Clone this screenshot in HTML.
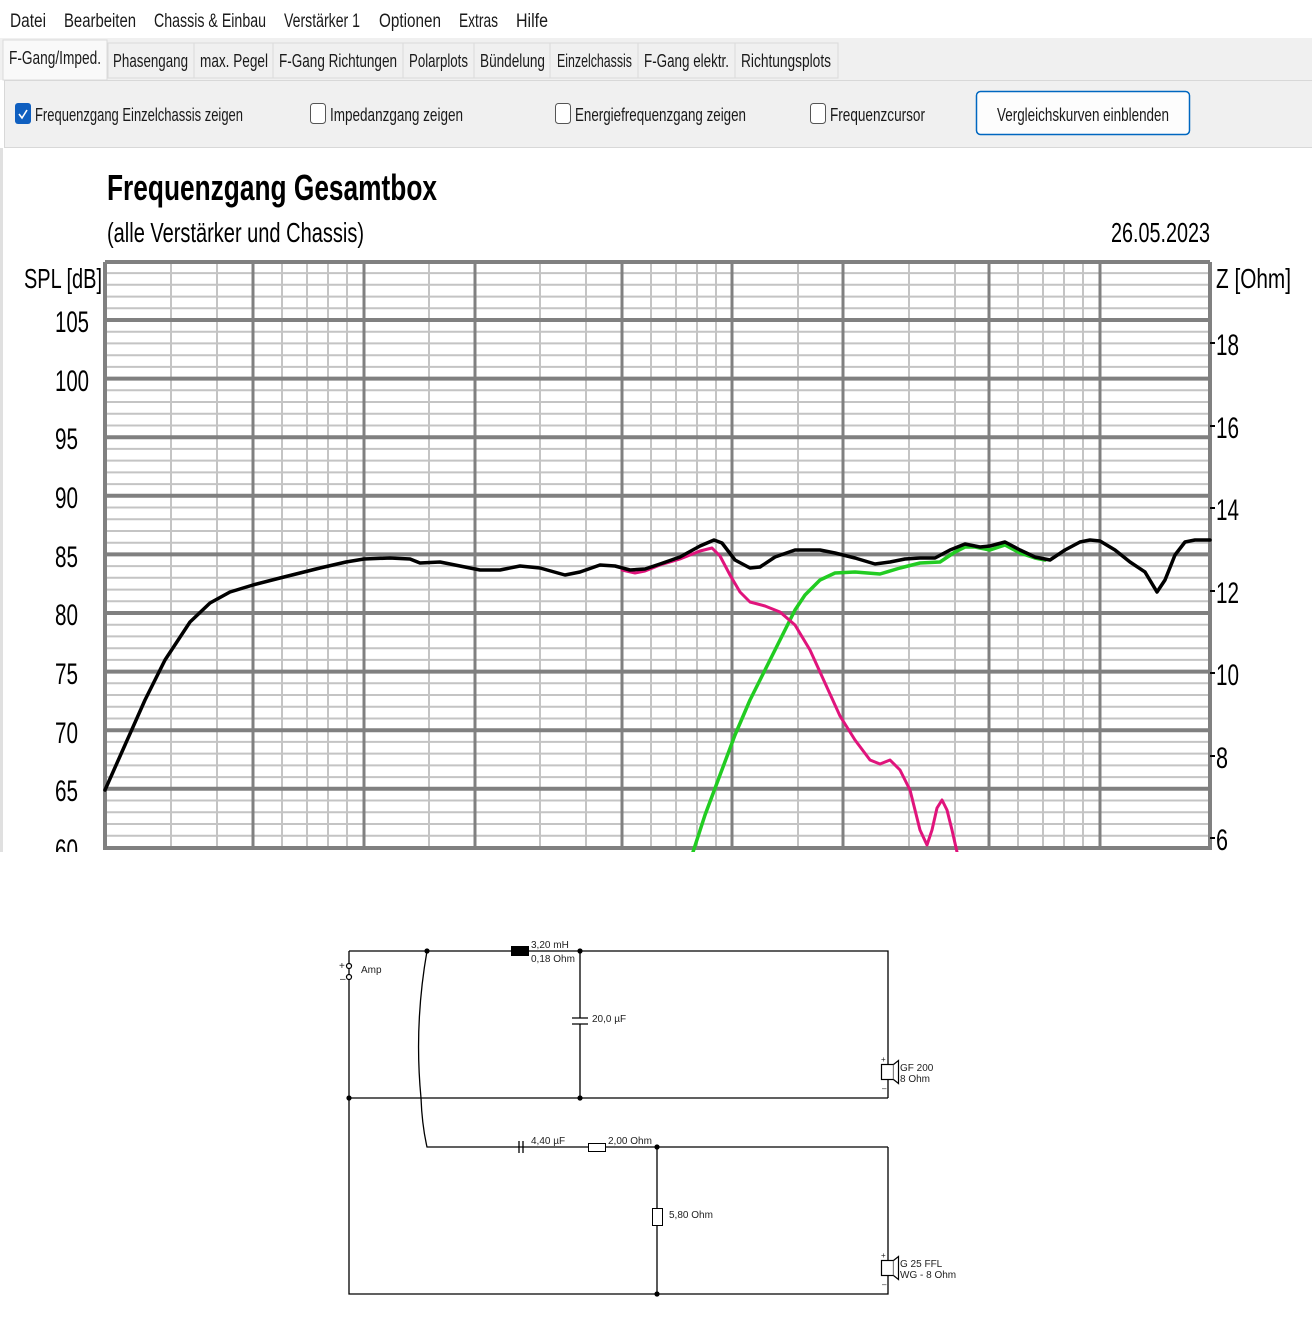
<!DOCTYPE html>
<html><head><meta charset="utf-8"><style>
html,body{margin:0;padding:0;background:#fff;width:1312px;height:1340px;overflow:hidden}
svg{display:block}
text{font-family:"Liberation Sans",sans-serif}
</style></head><body>
<svg width="1312" height="1340" viewBox="0 0 1312 1340" xmlns="http://www.w3.org/2000/svg">
<rect x="0" y="0" width="1312" height="38" fill="#ffffff"/>
<g font-size="19" fill="#1a1a1a">
<text x="10" y="27" textLength="36" lengthAdjust="spacingAndGlyphs">Datei</text>
<text x="64" y="27" textLength="72" lengthAdjust="spacingAndGlyphs">Bearbeiten</text>
<text x="154" y="27" textLength="112" lengthAdjust="spacingAndGlyphs">Chassis &amp; Einbau</text>
<text x="284" y="27" textLength="76" lengthAdjust="spacingAndGlyphs">Verstärker 1</text>
<text x="379" y="27" textLength="62" lengthAdjust="spacingAndGlyphs">Optionen</text>
<text x="459" y="27" textLength="39" lengthAdjust="spacingAndGlyphs">Extras</text>
<text x="516" y="27" textLength="32" lengthAdjust="spacingAndGlyphs">Hilfe</text>
</g>
<rect x="0" y="38" width="1312" height="42" fill="#f0f0f0"/>
<rect x="108" y="43" width="730" height="35" fill="#f0f0f0" stroke="#dadada"/>
<g stroke="#dadada"><line x1="194" y1="43" x2="194" y2="78"/><line x1="273" y1="43" x2="273" y2="78"/><line x1="403" y1="43" x2="403" y2="78"/><line x1="474" y1="43" x2="474" y2="78"/><line x1="550" y1="43" x2="550" y2="78"/><line x1="638" y1="43" x2="638" y2="78"/><line x1="735" y1="43" x2="735" y2="78"/></g>
<rect x="3" y="40" width="104" height="40" fill="#f9f9f9" stroke="#dadada"/>
<g font-size="18" fill="#1a1a1a">
<text x="9" y="64" textLength="92" lengthAdjust="spacingAndGlyphs">F-Gang/Imped.</text>
<text x="113" y="67" textLength="75" lengthAdjust="spacingAndGlyphs">Phasengang</text>
<text x="200" y="67" textLength="68" lengthAdjust="spacingAndGlyphs">max. Pegel</text>
<text x="279" y="67" textLength="118" lengthAdjust="spacingAndGlyphs">F-Gang Richtungen</text>
<text x="409" y="67" textLength="59" lengthAdjust="spacingAndGlyphs">Polarplots</text>
<text x="480" y="67" textLength="65" lengthAdjust="spacingAndGlyphs">Bündelung</text>
<text x="557" y="67" textLength="75" lengthAdjust="spacingAndGlyphs">Einzelchassis</text>
<text x="644" y="67" textLength="85" lengthAdjust="spacingAndGlyphs">F-Gang elektr.</text>
<text x="741" y="67" textLength="90" lengthAdjust="spacingAndGlyphs">Richtungsplots</text>
</g>
<rect x="4.5" y="80.5" width="1310" height="67" fill="#f0f0f0" stroke="#d8d8d8"/>
<rect x="15" y="103" width="16" height="21" rx="3" fill="#0f5fc0"/>
<path d="M19 114 l3 4 l5 -8" stroke="#fff" stroke-width="1.6" fill="none"/>
<rect x="310.5" y="103.5" width="15" height="20" rx="3" fill="#fff" stroke="#555"/>
<rect x="555.5" y="103.5" width="15" height="20" rx="3" fill="#fff" stroke="#555"/>
<rect x="810.5" y="103.5" width="15" height="20" rx="3" fill="#fff" stroke="#555"/>
<g font-size="18" fill="#1a1a1a">
<text x="35" y="121" textLength="208" lengthAdjust="spacingAndGlyphs">Frequenzgang Einzelchassis zeigen</text>
<text x="330" y="121" textLength="133" lengthAdjust="spacingAndGlyphs">Impedanzgang zeigen</text>
<text x="575" y="121" textLength="171" lengthAdjust="spacingAndGlyphs">Energiefrequenzgang zeigen</text>
<text x="830" y="121" textLength="95" lengthAdjust="spacingAndGlyphs">Frequenzcursor</text>
</g>
<rect x="976.5" y="91.5" width="213" height="43" rx="4" fill="#fdfdfd" stroke="#0067c0" stroke-width="1.5"/>
<text x="997" y="121" font-size="18" fill="#1a1a1a" textLength="172" lengthAdjust="spacingAndGlyphs">Vergleichskurven einblenden</text>
<rect x="0" y="148" width="3" height="704" fill="#e0e0e0"/>
<text x="107" y="200" font-size="36" font-weight="bold" fill="#000" textLength="330" lengthAdjust="spacingAndGlyphs">Frequenzgang Gesamtbox</text>
<text x="107" y="242" font-size="28" fill="#000" textLength="257" lengthAdjust="spacingAndGlyphs">(alle Verstärker und Chassis)</text>
<text x="1111" y="242" font-size="28" fill="#000" textLength="99" lengthAdjust="spacingAndGlyphs">26.05.2023</text>
<text x="24" y="288" font-size="28" fill="#000" textLength="78" lengthAdjust="spacingAndGlyphs">SPL [dB]</text>
<text x="1216" y="288" font-size="28" fill="#000" textLength="75" lengthAdjust="spacingAndGlyphs">Z [Ohm]</text>
<svg x="0" y="0" width="1312" height="852" viewBox="0 0 1312 852">
<g stroke="#c4c4c4" stroke-width="2">
<path d="M105 273.1H1210M105 284.8H1210M105 296.6H1210M105 308.3H1210M105 331.7H1210M105 343.4H1210M105 355.2H1210M105 366.9H1210M105 390.3H1210M105 402H1210M105 413.8H1210M105 425.5H1210M105 448.9H1210M105 460.6H1210M105 472.4H1210M105 484.1H1210M105 507.5H1210M105 519.2H1210M105 531H1210M105 542.7H1210M105 566.1H1210M105 577.8H1210M105 589.6H1210M105 601.3H1210M105 624.7H1210M105 636.4H1210M105 648.2H1210M105 659.9H1210M105 683.3H1210M105 695H1210M105 706.8H1210M105 718.5H1210M105 741.9H1210M105 753.6H1210M105 765.4H1210M105 777.1H1210M105 800.5H1210M105 812.2H1210M105 824H1210M105 835.7H1210"/>
<path d="M171 262V850M217 262V850M282 262V850M307 262V850M328 262V850M347 262V850M429 262V850M540 262V850M586 262V850M651 262V850M676 262V850M697 262V850M716 262V850M798 262V850M909 262V850M955 262V850M1018 262V850M1043 262V850M1064 262V850M1083 262V850"/>
</g>
<g stroke="#808080" stroke-width="3">
<path d="M253 262V850M364 262V850M475 262V850M622 262V850M732 262V850M843 262V850M989 262V850M1100 262V850"/>
</g>
<g stroke="#808080" stroke-width="4">
<path d="M103 320H1210M103 378.6H1210M103 437.2H1210M103 495.8H1210M103 554.4H1210M103 613H1210M103 671.6H1210M103 730.2H1210M103 788.8H1210M103 848H1210M105 262H1210"/>
<path d="M105 262V850M1210 262V850"/>
<path d="M1210 343H1215M1210 426H1215M1210 508H1215M1210 591H1215M1210 673H1215M1210 756H1215M1210 838H1215" stroke-width="2" stroke="#000"/>
</g>
<g font-size="30" fill="#000">
<text x="55" y="332" textLength="34" lengthAdjust="spacingAndGlyphs">105</text><text x="55" y="391" textLength="34" lengthAdjust="spacingAndGlyphs">100</text><text x="55" y="449" textLength="23" lengthAdjust="spacingAndGlyphs">95</text><text x="55" y="508" textLength="23" lengthAdjust="spacingAndGlyphs">90</text><text x="55" y="567" textLength="23" lengthAdjust="spacingAndGlyphs">85</text><text x="55" y="625" textLength="23" lengthAdjust="spacingAndGlyphs">80</text><text x="55" y="684" textLength="23" lengthAdjust="spacingAndGlyphs">75</text><text x="55" y="743" textLength="23" lengthAdjust="spacingAndGlyphs">70</text><text x="55" y="801" textLength="23" lengthAdjust="spacingAndGlyphs">65</text><text x="55" y="860" textLength="23" lengthAdjust="spacingAndGlyphs">60</text>
</g>
<g font-size="30" fill="#000">
<text x="1216" y="355" textLength="23" lengthAdjust="spacingAndGlyphs">18</text><text x="1216" y="438" textLength="23" lengthAdjust="spacingAndGlyphs">16</text><text x="1216" y="520" textLength="23" lengthAdjust="spacingAndGlyphs">14</text><text x="1216" y="603" textLength="23" lengthAdjust="spacingAndGlyphs">12</text><text x="1216" y="685" textLength="23" lengthAdjust="spacingAndGlyphs">10</text><text x="1216" y="768" textLength="12" lengthAdjust="spacingAndGlyphs">8</text><text x="1216" y="850" textLength="12" lengthAdjust="spacingAndGlyphs">6</text>
</g>
<g fill="none" stroke-linejoin="round" stroke-linecap="round">
<polyline stroke="#22cc22" stroke-width="3.5" points="693,852 705,815 720,775 735,735 750,700 765,670 780,640 795,610 805,595 820,580 835,573 855,572 880,574 900,568 920,563 940,562 955,552 965,547 975,547 990,550 1005,545 1020,553 1035,558 1045,560"/>
<polyline stroke="#e0147c" stroke-width="3" points="622,570 635,573 645,571 660,565 680,559 700,551 712,548 720,556 730,575 740,592 750,602 765,606 780,612 795,625 810,650 825,683 840,716 855,740 870,760 880,764 890,760 900,770 910,790 915,810 920,830 927,845 932,830 937,808 942,800 947,810 952,830 957,852"/>
<polyline stroke="#000" stroke-width="3.5" points="105,790 125,745 145,700 165,660 190,622 210,603 230,592 253,585 280,578 300,573 320,568 346,562 364,559 390,558 410,559 420,563 440,562 460,566 480,570 500,570 520,566 540,568 565,575 580,572 600,565 615,566 630,570 645,569 660,564 680,557 700,546 714,540 722,543 735,560 750,568 760,567 775,557 795,550 820,550 835,553 855,558 875,564 890,562 905,559 920,558 935,558 950,550 965,544 980,547 990,546 1005,542 1020,550 1035,557 1050,560 1065,550 1080,542 1090,540 1100,541 1115,550 1130,562 1145,572 1157,592 1165,580 1175,555 1185,542 1195,540 1210,540"/>
</g>
</svg>
<g stroke="#000" stroke-width="1.3" fill="none">
<path d="M349 951H888V1098M349 951V1294H888V1147M349 1098H888"/>
<path d="M580 951V1018M580 1024V1098M572 1018H588M572 1024H588"/>
<path d="M427 951 Q414 1025 421 1098 Q422 1125 427 1147H888"/>
<path d="M657 1147V1294"/>
<path d="M519 1141V1153M523 1141V1153"/>
</g>
<rect x="511" y="946" width="18" height="10" fill="#000"/>
<rect x="588.5" y="1143.5" width="17" height="8" fill="#fff" stroke="#000"/>
<rect x="652.5" y="1208.5" width="10" height="17" fill="#fff" stroke="#000"/>
<g fill="#fff" stroke="#000" stroke-width="1.2">
<rect x="881.5" y="1064.5" width="12" height="15"/><path d="M893.5 1064.5 l5 -4 v23 l-5 -4" />
<rect x="881.5" y="1260.5" width="12" height="15"/><path d="M893.5 1260.5 l5 -4 v23 l-5 -4" />
<circle cx="349" cy="966" r="2.5"/><circle cx="349" cy="977" r="2.5"/>
</g>
<g fill="#000">
<circle cx="427" cy="951" r="2.6"/><circle cx="580" cy="951" r="2.6"/><circle cx="349" cy="1098" r="2.6"/><circle cx="580" cy="1098" r="2.6"/><circle cx="657" cy="1147" r="2.6"/><circle cx="657" cy="1294" r="2.6"/>
</g>
<g font-size="10" fill="#222">
<text x="531" y="948">3,20 mH</text><text x="531" y="962">0,18 Ohm</text>
<text x="592" y="1022">20,0 µF</text>
<text x="361" y="973">Amp</text><text x="339" y="969">+</text><text x="340" y="982">–</text>
<text x="900" y="1071">GF 200</text><text x="900" y="1082">8 Ohm</text>
<text x="881" y="1062" font-size="8">+</text><text x="882" y="1091" font-size="8">–</text>
<text x="531" y="1144">4,40 µF</text><text x="608" y="1144">2,00 Ohm</text>
<text x="669" y="1218">5,80 Ohm</text>
<text x="900" y="1267">G 25 FFL</text><text x="900" y="1278">WG - 8 Ohm</text>
<text x="881" y="1258" font-size="8">+</text><text x="882" y="1287" font-size="8">–</text>
</g>
</svg>
</body></html>
